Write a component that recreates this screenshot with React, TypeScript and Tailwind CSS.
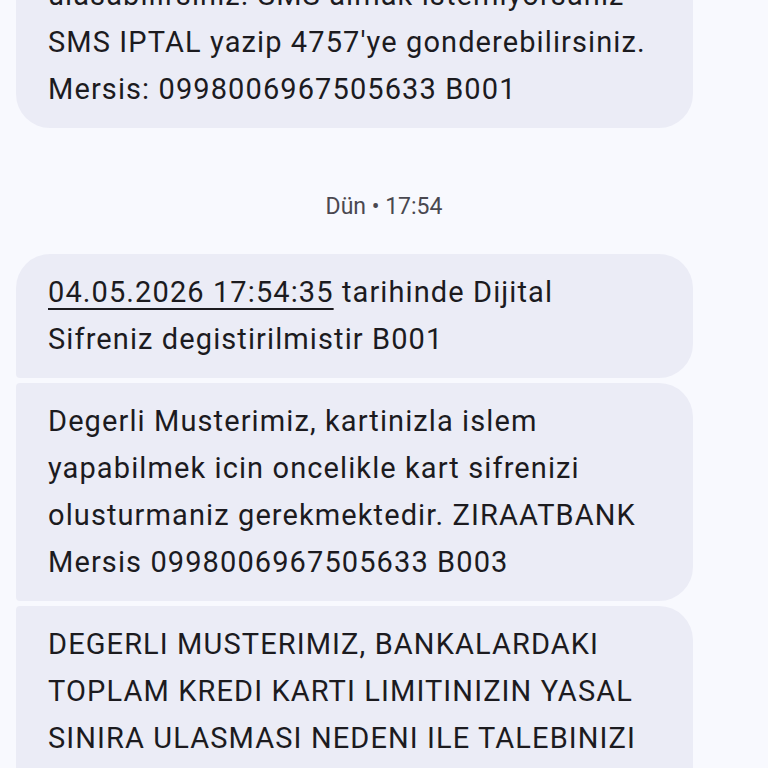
const font = { fontFamily: "Roboto, 'Noto Sans', sans-serif" };

function Lines({ lines }: { lines: React.ReactNode[] }) {
  return (
    <>
      {lines.map((l, i) => (
        <span key={i} className="block whitespace-nowrap">
          {l}
        </span>
      ))}
    </>
  );
}

const bubble =
  "w-[677px] bg-[#ebecf6] px-8 py-[15px] text-[29px] leading-[47px] tracking-[1.1px]";

export default function App() {
  return (
    <div
      className="w-[768px] h-[768px] overflow-hidden bg-[#f8f9fe] text-[#1c1b1f]"
      style={font}
    >
      <div className="flex flex-col px-4">
        {/* earlier message, cut at the top */}
        <div className={`${bubble} mt-[-43px] rounded-[34px] rounded-tl-[4px]`}>
          <Lines
            lines={[
              "ulasabilirsiniz. SMS almak istemiyorsaniz",
              "SMS IPTAL yazip 4757'ye gonderebilirsiniz.",
              "Mersis: 0998006967505633 B001",
            ]}
          />
        </div>

        <div className="mt-[65px] mb-[33px] text-center text-[23px] leading-[28px] text-[#4a4850]">
          Dün • 17:54
        </div>

        <div className="flex flex-col gap-[5px]">
          <div className={`${bubble} rounded-[34px] rounded-bl-[4px]`}>
            <Lines
              lines={[
                <>
                  <span className="underline decoration-[2px] underline-offset-[6px]">
                    04.05.2026 17:54:35
                  </span>{" "}
                  tarihinde Dijital
                </>,
                "Sifreniz degistirilmistir B001",
              ]}
            />
          </div>

          <div className={`${bubble} rounded-[34px] rounded-l-[4px]`}>
            <Lines
              lines={[
                "Degerli Musterimiz, kartinizla islem",
                "yapabilmek icin oncelikle kart sifrenizi",
                "olusturmaniz gerekmektedir. ZIRAATBANK",
                "Mersis 0998006967505633 B003",
              ]}
            />
          </div>

          <div className={`${bubble} rounded-[34px] rounded-l-[4px]`}>
            <Lines
              lines={[
                "DEGERLI MUSTERIMIZ, BANKALARDAKI",
                "TOPLAM KREDI KARTI LIMITINIZIN YASAL",
                "SINIRA ULASMASI NEDENI ILE TALEBINIZI",
                "KARSILAYAMIYORUZ.",
              ]}
            />
          </div>
        </div>
      </div>
    </div>
  );
}
